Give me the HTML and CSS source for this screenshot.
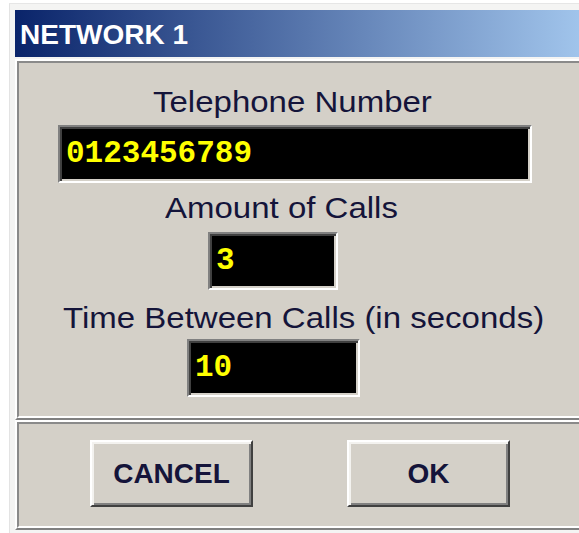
FILE: index.html
```html
<!DOCTYPE html>
<html lang="en">
<head>
<meta charset="utf-8">
<title>NETWORK 1</title>
<link rel="stylesheet" href="styles.css">
</head>
<body>
<div class="window">
  <div class="titlebar"><span class="title">NETWORK 1</span></div>

  <div class="panel">
    <div class="panel-inner fields">
      <span class="label label-phone">Telephone Number</span>
      <div class="field field-phone">0123456789</div>

      <span class="label label-amount">Amount of Calls</span>
      <div class="field field-amount">3</div>

      <span class="label label-time">Time Between Calls (in seconds)</span>
      <div class="field field-time">10</div>
    </div>
  </div>

  <div class="panel">
    <div class="panel-inner actions">
      <button class="btn btn-cancel" type="button">CANCEL</button>
      <button class="btn btn-ok" type="button">OK</button>
    </div>
  </div>
</div>
</body>
</html>
```

FILE: styles.css
```css
html, body {
  margin: 0;
  padding: 0;
  background: #ffffff;
  overflow: hidden;
}

body {
  width: 579px;
  height: 533px;
}

/* dialog frame */
.window {
  margin: 3px 0 0 9px;
  width: 585px;
  padding: 6px 0 4px 5px;
  background: #f4f4f3;
  border-left: 1px solid #e3e3e3;
  border-top: 1px solid #e6e6e6;
}

.titlebar {
  height: 47px;
  display: flex;
  align-items: center;
  background: linear-gradient(to right, #0a246a 0%, #a6caf0 100%);
}

.title {
  margin-left: 5px;
  padding-top: 1px;
  font: bold 28px/47px "Liberation Sans", Arial, sans-serif;
  color: #ffffff;
  white-space: nowrap;
}

/* etched panels: raised outer edge, sunken inner edge */
.panel {
  margin-top: 2px;
  border: 2px solid;
  border-color: #ffffff #808080 #808080 #ffffff;
}

.panel + .panel {
  margin-top: 0;
}

.panel-inner {
  box-sizing: border-box;
  border: 2px solid;
  border-color: #8a8a8a #ffffff #ffffff #8a8a8a;
  background: #d4d0c8;
}

.fields {
  height: 357px;
  display: flex;
  flex-direction: column;
  align-items: flex-start;
}

.label {
  display: inline-block;
  font: 30px/34px "Liberation Sans", Arial, sans-serif;
  color: #14143a;
  white-space: nowrap;
  transform: scaleX(1.1);
  transform-origin: left center;
}

.label-phone  { margin: 22px 0 0 134px; }
.label-amount { margin: 8px 0 0 146px; }
.label-time   { margin: 11px 0 0 44px; }

/* black numeric entry boxes */
.field {
  box-sizing: border-box;
  height: 58px;
  padding-left: 6px;
  border: 2px solid;
  border-color: #808080 #ffffff #ffffff #808080;
  box-shadow: inset 2px 2px 0 #404040, inset -2px -2px 0 #d4d0c8;
  background: #000000;
  color: #ffff00;
  font: bold 31px/54px "Liberation Mono", "Courier New", monospace;
  white-space: nowrap;
}

.field-phone  { margin: 6px 0 0 39px; width: 474px; }
.field-amount { margin: 7px 0 0 189px; width: 130px; }
.field-time   { margin: 4px 0 0 168px; width: 173px; }

/* button row */
.actions {
  height: 106px;
  display: flex;
  align-items: flex-start;
  gap: 94px;
  padding: 16px 0 0 71px;
}

.btn {
  box-sizing: border-box;
  width: 163px;
  height: 67px;
  padding: 0;
  margin: 0;
  border: 2px solid;
  border-color: #ffffff #404040 #404040 #ffffff;
  box-shadow: inset 2px 2px 0 #f3f2ef, inset -2px -2px 0 #808080;
  background: #d4d0c8;
  color: #14143a;
  font: bold 28px "Liberation Sans", Arial, sans-serif;
  cursor: default;
}
```
